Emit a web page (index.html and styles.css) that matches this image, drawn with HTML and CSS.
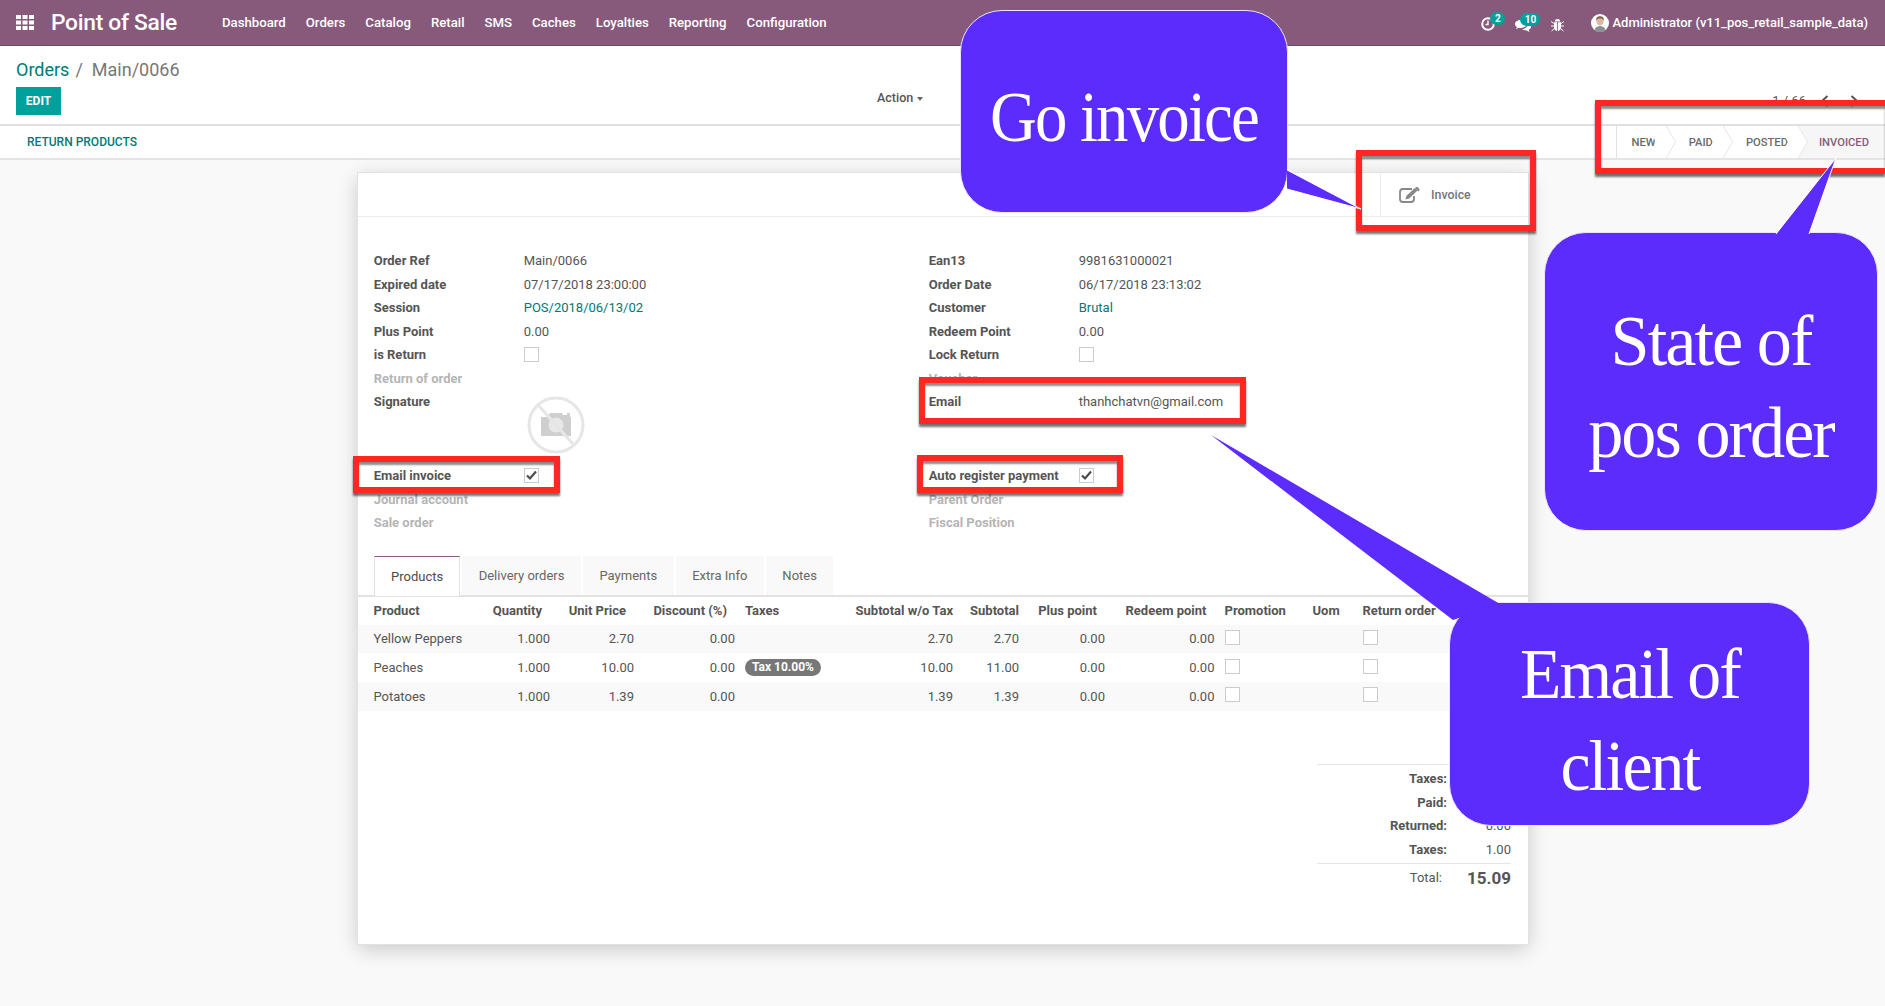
FILE: index.html
```html
<!DOCTYPE html>
<html lang="en">
<head>
    <meta charset="UTF-8">
    <title>Orders - Main/0066</title>
    <link rel="stylesheet" href="styles.css">
</head>
<body>
    <header class="navbar">
        <svg class="apps-icon" width="18" height="15" viewBox="0 0 18 15" fill="#fff">
            <rect x="0" y="0" width="5" height="4"/><rect x="6.5" y="0" width="5" height="4"/><rect x="13" y="0" width="5" height="4"/>
            <rect x="0" y="5.5" width="5" height="4"/><rect x="6.5" y="5.5" width="5" height="4"/><rect x="13" y="5.5" width="5" height="4"/>
            <rect x="0" y="11" width="5" height="4"/><rect x="6.5" y="11" width="5" height="4"/><rect x="13" y="11" width="5" height="4"/>
        </svg>
        <span class="app-title">Point of Sale</span>
        <nav class="menu">
            <a>Dashboard</a><a>Orders</a><a>Catalog</a><a>Retail</a><a>SMS</a><a>Caches</a><a>Loyalties</a><a>Reporting</a><a>Configuration</a>
        </nav>
        <div class="systray">
            <span class="tray-item tray-clock">
                <svg width="14" height="14" viewBox="0 0 14 14" fill="none" stroke="#fff" stroke-width="2"><circle cx="7" cy="7" r="5.8"/><path d="M7 3.5V7.5H4.5" stroke-width="1.4"/></svg>
                <b class="badge">2</b>
            </span>
            <span class="tray-item tray-chat">
                <svg width="16" height="12" viewBox="0 0 16 12" fill="#fff"><path d="M6 0C2.7 0 0 1.7 0 3.9c0 1.2.8 2.300 2 3L1 9l3-1.300c.6.1 1.300.2 2 .2 3.300 0 6-1.800 6-4S9.300 0 6 0z"/><path d="M13 4.300c0 2.500-2.800 4.500-6 4.700 1 .9 2.400 1.300 4 1.300l3.500 1.700-.8-2.400C15.200 9 16 8 16 6.900c0-1.100-1.200-2.100-3-2.600z"/></svg>
                <b class="badge">10</b>
            </span>
            <span class="tray-item tray-bug">
                <svg width="13" height="14" viewBox="0 0 13 14" fill="#fff"><path d="M3.700 3.500C4 1.800 5 1 6.500 1s2.500.8 2.800 2.500z"/><path d="M3 4.300h3.100V13C4 12.800 3 11 3 9zM6.900 4.300H10V9c0 2-1 3.800-3.100 4z"/><path d="M0 3.500l3 2M13 3.500l-3 2M0 8h3M10 8h3M.5 13l3-2.500M12.500 13l-3-2.500" stroke="#fff" stroke-width="1" fill="none"/></svg>
            </span>
            <svg class="avatar" width="18" height="18" viewBox="0 0 18 18">
                <circle cx="9" cy="9" r="9" fill="#fff"/>
                <ellipse cx="9" cy="7" rx="3.600" ry="4.400" fill="#d9b9a0"/>
                <path d="M5.200 7C4.800 3 7 2.300 9 2.300s4.200.7 3.800 4.700c-.5-2-2-2.500-3.800-2.500S5.700 5 5.200 7z" fill="#7b6650"/>
                <path d="M3.500 16c.8-3 3-4 5.500-4s4.700 1 5.500 4a9 9 0 0 1-11 0z" fill="#8d8f96"/>
            </svg>
            <span class="user-name">Administrator (v11_pos_retail_sample_data)</span>
        </div>
    </header>

    <section class="control-panel">
        <div class="breadcrumb"><a>Orders</a><span class="crumb-sep">/</span><span class="crumb-current">Main/0066</span></div>
        <div class="cp-row">
            <button class="btn-edit">EDIT</button>
            <span class="cp-action">Action <i class="caret"></i></span>
            <span class="pager"><span class="pager-count">1 / 66</span>
                <svg width="9" height="12" viewBox="0 0 9 12" fill="none" stroke="#555" stroke-width="2"><path d="M7.500 1L2 6l5.500 5"/></svg>
                <svg width="9" height="12" viewBox="0 0 9 12" fill="none" stroke="#555" stroke-width="2"><path d="M1.500 1L7 6l-5.500 5"/></svg>
            </span>
        </div>
    </section>

    <section class="statusbar-row">
        <a class="return-link">RETURN PRODUCTS</a>
        <div class="statusbar">
            <span class="step">NEW</span>
            <span class="step">PAID</span>
            <span class="step">POSTED</span>
            <span class="step step-active">INVOICED</span>
        </div>
    </section>

    <main class="sheet">
        <div class="button-box">
            <div class="stat-button">
                <svg width="22" height="16" viewBox="0 0 22 16" fill="none">
                    <path d="M13 2H4a3 3 0 0 0-3 3v7a3 3 0 0 0 3 3h8a3 3 0 0 0 3-3V9" stroke="#888" stroke-width="1.800"/>
                    <path d="M6.500 12.500l.8-3.500 8.400-8 2.800 2.600-8.400 8z" fill="#888"/>
                    <path d="M16.700 0l1.500-.2 2.300 2.200-.2 1.500-1 .9-3-2.800z" fill="#888"/>
                </svg>
                <span>Invoice</span>
            </div>
        </div>

        <div class="form-groups">
            <div class="form-col">
                <div class="field"><label>Order Ref</label><span>Main/0066</span></div>
                <div class="field"><label>Expired date</label><span>07/17/2018 23:00:00</span></div>
                <div class="field"><label>Session</label><a class="link">POS/2018/06/13/02</a></div>
                <div class="field"><label>Plus Point</label><span>0.00</span></div>
                <div class="field"><label>is Return</label><i class="check"></i></div>
                <div class="field muted"><label>Return of order</label></div>
                <div class="field field-tall">
                    <label>Signature</label>
                    <svg class="no-image" width="58" height="58" viewBox="0 0 58 58">
                        <circle cx="29" cy="29" r="27" fill="none" stroke="#e6e6e6" stroke-width="3"/>
                        <path d="M14 21h7l2-4h12l1 2h4v-2h3v4h1v19H14z" fill="#cfcfcf"/>
                        <circle cx="29" cy="29" r="7.500" fill="#e8e8e8"/>
                        <path d="M12 10l34 38" stroke="#e6e6e6" stroke-width="3"/>
                    </svg>
                </div>
                <div class="field"><label>Email invoice</label><i class="check"><svg width="13" height="11" viewBox="0 0 13 11" fill="none" stroke="#4c4c4c" stroke-width="2.200"><path d="M2 5.500l3 3 6-7"/></svg></i></div>
                <div class="field muted"><label>Journal account</label></div>
                <div class="field muted"><label>Sale order</label></div>
            </div>
            <div class="form-col">
                <div class="field"><label>Ean13</label><span>9981631000021</span></div>
                <div class="field"><label>Order Date</label><span>06/17/2018 23:13:02</span></div>
                <div class="field"><label>Customer</label><a class="link">Brutal</a></div>
                <div class="field"><label>Redeem Point</label><span>0.00</span></div>
                <div class="field"><label>Lock Return</label><i class="check"></i></div>
                <div class="field muted"><label>Voucher</label></div>
                <div class="field field-tall"><label>Email</label><span>thanhchatvn@gmail.com</span></div>
                <div class="field"><label>Auto register payment</label><i class="check"><svg width="13" height="11" viewBox="0 0 13 11" fill="none" stroke="#4c4c4c" stroke-width="2.200"><path d="M2 5.500l3 3 6-7"/></svg></i></div>
                <div class="field muted"><label>Parent Order</label></div>
                <div class="field muted"><label>Fiscal Position</label></div>
            </div>
        </div>

        <ul class="tabs">
            <li class="tab tab-active">Products</li>
            <li class="tab">Delivery orders</li>
            <li class="tab">Payments</li>
            <li class="tab">Extra Info</li>
            <li class="tab">Notes</li>
        </ul>

        <table class="lines">
            <thead>
                <tr>
                    <th class="left first">Product</th>
                    <th class="sort">Quantity</th>
                    <th class="sort">Unit Price</th>
                    <th class="sort">Discount (%)</th>
                    <th class="left">Taxes</th>
                    <th>Subtotal w/o Tax</th>
                    <th>Subtotal</th>
                    <th class="sort">Plus point</th>
                    <th class="sort">Redeem point</th>
                    <th class="left">Promotion</th>
                    <th class="left">Uom</th>
                    <th class="left">Return order</th>
                    <th></th>
                </tr>
            </thead>
            <tbody>
                <tr>
                    <td class="left first">Yellow Peppers</td><td>1.000</td><td>2.70</td><td>0.00</td><td class="left"></td><td>2.70</td><td>2.70</td><td>0.00</td><td>0.00</td>
                    <td class="left"><i class="check"></i></td><td></td><td class="left"><i class="check"></i></td><td></td>
                </tr>
                <tr>
                    <td class="left first">Peaches</td><td>1.000</td><td>10.00</td><td>0.00</td><td class="left"><span class="tax-tag">Tax 10.00%</span></td><td>10.00</td><td>11.00</td><td>0.00</td><td>0.00</td>
                    <td class="left"><i class="check"></i></td><td></td><td class="left"><i class="check"></i></td><td></td>
                </tr>
                <tr>
                    <td class="left first">Potatoes</td><td>1.000</td><td>1.39</td><td>0.00</td><td class="left"></td><td>1.39</td><td>1.39</td><td>0.00</td><td>0.00</td>
                    <td class="left"><i class="check"></i></td><td></td><td class="left"><i class="check"></i></td><td></td>
                </tr>
            </tbody>
        </table>

        <div class="totals">
            <div class="total-row"><label>Taxes:</label><span>14.09</span></div>
            <div class="total-row"><label>Paid:</label><span>15.09</span></div>
            <div class="total-row"><label>Returned:</label><span>0.00</span></div>
            <div class="total-row"><label>Taxes:</label><span>1.00</span></div>
            <div class="total-row total-grand"><label>Total:</label><span>15.09</span></div>
        </div>
    </main>

    <!-- Annotazioni sopra la pagina -->
    <div class="mark mark-state"></div>
    <div class="mark mark-invoice"></div>
    <div class="mark mark-email"></div>
    <div class="mark mark-email-invoice"></div>
    <div class="mark mark-auto"></div>

    <div class="bubble bubble-invoice"><span>Go invoice</span></div>
    <div class="bubble bubble-state"><span>State of<br>pos order</span></div>
    <div class="bubble bubble-email"><span>Email of<br>client</span></div>

    <svg class="tails" width="1885" height="1006" viewBox="0 0 1885 1006">
        <path d="M1287 170L1361 209L1287 189" fill="#5b2cfb" stroke="#fff" stroke-width="1"/>
        <path d="M1776 234L1836 158L1809 234" fill="#5b2cfb" stroke="#fff" stroke-width="1"/>
        <path d="M1453 620L1211 435L1500 604" fill="#5b2cfb"/>
    </svg>
</body>
</html>
```

FILE: styles.css
```css
html, body {
    margin: 0;
    height: 1006px;
    overflow: hidden;
}
body {
    position: relative;
    font-family: Roboto, "Noto Sans", sans-serif;
    font-size: 13px;
    color: #555;
    background-color: #f9f9f9;
}

/* Barra superiore */
.navbar {
    display: flex;
    align-items: center;
    height: 45px;
    border-bottom: 1px solid #6f4a66;
    background-color: #875a7b;
    color: white;
}
.apps-icon {
    margin-left: 16px;
}
.app-title {
    margin-left: 17px;
    font-size: 22.800px;
    font-weight: 500;
    letter-spacing: -0.3px;
}
.menu {
    display: flex;
    gap: 20px;
    margin-left: 45px;
    font-size: 13.200px;
    font-weight: 500;
}
.systray {
    display: flex;
    align-items: center;
    margin-left: auto;
    padding-right: 17px;
}
.tray-item {
    position: relative;
    display: flex;
}
.tray-clock {
    margin-top: 2px;
}
.tray-chat {
    margin-left: 20px;
    margin-top: 6px;
}
.tray-bug {
    margin-left: 20px;
    margin-top: 4px;
}
.badge {
    position: absolute;
    top: -5px;
    left: 9px;
    min-width: 13px;
    height: 13px;
    padding: 0 1px;
    border-radius: 7px;
    background-color: #00a09d;
    font-size: 10px;
    font-weight: 700;
    line-height: 13px;
    text-align: center;
}
.tray-chat .badge {
    top: -7px;
    left: 5px;
    min-width: 18px;
}
.avatar {
    margin-left: 27px;
}
.user-name {
    margin-left: 3px;
    font-weight: 500;
}

/* Pannello di controllo */
.control-panel {
    height: 78px;
    padding: 0 16px;
    border-bottom: 2px solid #e0e0e0;
    background-color: white;
}
.breadcrumb {
    padding-top: 12px;
    height: 29px;
    font-size: 18px;
    line-height: 24px;
}
.breadcrumb a {
    color: #007a77;
}
.crumb-sep {
    margin: 0 9px 0 6px;
    color: #777;
}
.crumb-current {
    color: #777;
}
.cp-row {
    display: flex;
    align-items: flex-start;
}
.btn-edit {
    width: 45px;
    height: 28px;
    border: none;
    padding: 0;
    background-color: #00a09d;
    color: white;
    font-family: inherit;
    font-size: 12px;
    font-weight: 700;
}
.cp-action {
    margin-left: 816px;
    font-size: 12.5px;
    font-weight: 500;
    line-height: 22px;
}
.caret {
    display: inline-block;
    margin-left: 1px;
    vertical-align: middle;
    border-top: 4px solid #666;
    border-left: 3px solid transparent;
    border-right: 3px solid transparent;
}
.pager {
    display: flex;
    align-items: center;
    gap: 21px;
    margin: 4px 0 0 auto;
    padding-right: 10px;
    line-height: 20px;
}
.pager-count {
    margin-right: -7px;
}

/* Riga con i pulsanti e gli stati */
.statusbar-row {
    display: flex;
    align-items: center;
    justify-content: space-between;
    height: 32px;
    border-bottom: 2px solid #e4e4e4;
    background-color: white;
}
.return-link {
    margin-left: 27px;
    color: #007a77;
    font-size: 12px;
    font-weight: 500;
}
.statusbar {
    display: flex;
    align-self: stretch;
    border-left: 1px solid #e2e2e2;
    font-size: 11.200px;
    font-weight: 500;
    color: #6a6a6a;
}
.step {
    position: relative;
    display: flex;
    align-items: center;
    padding: 0 20px 0 13px;
}
.step:first-child {
    padding-left: 15px;
}
.step::before,
.step::after {
    content: "";
    position: absolute;
    right: 0;
    width: 20px;
    height: 50%;
    z-index: 1;
    box-sizing: border-box;
    border-right: 1px solid #e6e6e6;
    background-color: white;
}
.step::before {
    top: 0;
    transform-origin: bottom right;
    transform: skewX(30deg);
}
.step::after {
    bottom: 0;
    transform-origin: top right;
    transform: skewX(-30deg);
}
.step-active {
    margin-left: -10px;
    padding: 0 16px 0 21px;
    background-color: #f6f6f6;
    color: #875a7b;
}
.step-active::before,
.step-active::after {
    display: none;
}

/* Foglio */
.sheet {
    width: 1170px;
    height: 771px;
    margin: 12px 0 0 357px;
    border: 1px solid #e2e2e2;
    background-color: white;
    box-shadow: 0 5px 20px -1px rgba(0, 0, 0, 0.2);
}
.button-box {
    display: flex;
    justify-content: flex-end;
    height: 43px;
    border-bottom: 1px solid #ececec;
}
.stat-button {
    display: flex;
    align-items: center;
    gap: 10px;
    width: 129px;
    padding-left: 18px;
    border-left: 1px solid #ececec;
    color: #777;
    font-size: 12.4px;
    font-weight: 500;
}
.form-groups {
    display: grid;
    grid-template-columns: 555px 1fr;
    padding: 32px 0 0 15.700px;
}
.field {
    display: flex;
    align-items: center;
    height: 23.500px;
}
.field label {
    width: 150px;
    flex: none;
    font-weight: 700;
}
.field-tall {
    position: relative;
    align-items: flex-start;
    height: 74px;
    line-height: 23.500px;
}
.muted label {
    color: #b5b5b5;
}
.link {
    color: #007a77;
}
.check {
    display: inline-flex;
    align-items: center;
    justify-content: center;
    width: 13px;
    height: 13px;
    border: 1px solid #ccc;
    background-color: white;
}
.no-image {
    margin: 6px 0 0 3px;
}

/* Schede */
.tabs {
    display: flex;
    gap: 2px;
    height: 39px;
    margin: 21px 0 0;
    padding: 0 0 0 16px;
    list-style: none;
    border-bottom: 2px solid #e2e2e2;
}
.tab {
    padding: 0 16.500px;
    height: 39px;
    background-color: #f9f9f9;
    color: #666;
    line-height: 40px;
}
.tab-active {
    height: 40px;
    padding: 0 16px;
    box-sizing: border-box;
    border-top: 1px solid #875a7b;
    border-left: 1px solid #e2e2e2;
    border-right: 1px solid #e2e2e2;
    background-color: white;
    color: #4c4c4c;
}

/* Righe ordine */
.lines {
    width: 100%;
    border-collapse: collapse;
    table-layout: fixed;
}
.lines th,
.lines td {
    box-sizing: border-box;
    padding: 0 5px;
    text-align: right;
    white-space: nowrap;
    overflow: hidden;
}
.lines th {
    height: 28px;
    font-weight: 700;
}
.lines td {
    height: 28.700px;
}
.lines thead {
    box-shadow: 0 2px 3px rgba(0, 0, 0, 0.05);
}
.lines tbody tr:nth-child(odd) {
    background-color: #f9f9f9;
}
.lines .left {
    text-align: left;
}
.lines .first {
    padding-left: 15.500px;
}
.lines .sort {
    padding-right: 13px;
}
.lines th:nth-child(1) { width: 129px; }
.lines th:nth-child(2) { width: 68px; }
.lines th:nth-child(3) { width: 84px; }
.lines th:nth-child(4) { width: 101px; }
.lines th:nth-child(5) { width: 105px; }
.lines th:nth-child(6) { width: 113px; }
.lines th:nth-child(7) { width: 66px; }
.lines th:nth-child(8) { width: 86px; }
.lines th:nth-child(9) { width: 109.500px; }
.lines th:nth-child(10) { width: 88px; }
.lines th:nth-child(11) { width: 50px; }
.lines th:nth-child(12) { width: 92.500px; }
.tax-tag {
    display: inline-block;
    padding: 0 7px;
    border-radius: 9px;
    background-color: #777;
    color: white;
    font-size: 12px;
    font-weight: 700;
    line-height: 17px;
}

/* Totali */
.totals {
    width: 194px;
    margin: 53px 17px 0 auto;
    border-top: 1px solid #e6e6e6;
    padding-top: 2px;
}
.total-row {
    display: flex;
    justify-content: space-between;
    align-items: center;
    height: 23.700px;
}
.total-row label {
    width: 130px;
    font-weight: 700;
    text-align: right;
}
.total-grand {
    height: 27px;
    margin-top: 2px;
    border-top: 1px solid #e6e6e6;
}
.total-grand label {
    width: 125px;
    font-weight: 400;
}
.total-grand span {
    font-size: 17px;
    font-weight: 700;
}

/* Riquadri rossi */
.mark {
    position: absolute;
    box-sizing: border-box;
    border: 6px solid #ff2626;
    box-shadow: 0 3px 2px rgba(0, 0, 0, 0.55), inset 0 3px 2px rgba(0, 0, 0, 0.45);
}
.mark-state {
    left: 1595px;
    top: 100px;
    width: 290px;
    height: 74px;
    border-right: none;
}
.mark-invoice {
    left: 1356px;
    top: 150px;
    width: 180px;
    height: 81px;
}
.mark-email {
    left: 919px;
    top: 377px;
    width: 327px;
    height: 47px;
}
.mark-email-invoice {
    left: 353px;
    top: 456px;
    width: 207px;
    height: 37px;
}
.mark-auto {
    left: 917px;
    top: 455px;
    width: 206px;
    height: 38px;
}

/* Fumetti */
.bubble {
    position: absolute;
    box-sizing: border-box;
    display: flex;
    align-items: center;
    justify-content: center;
    padding-top: 11px;
    border: 1.500px solid #e9e4ff;
    border-radius: 42px;
    background-color: #5b2cfb;
    color: white;
    font-family: "Liberation Serif", serif;
    font-size: 72px;
    letter-spacing: -2px;
    line-height: 92px;
    text-align: center;
}
.bubble span {
    display: inline-block;
    transform: scaleX(0.9);
}
.bubble-invoice {
    left: 960px;
    top: 10px;
    width: 328px;
    height: 203px;
}
.bubble-state {
    left: 1544px;
    top: 232px;
    width: 334px;
    height: 299px;
}
.bubble-state span {
    transform: scaleX(0.975);
}
.bubble-email {
    left: 1449px;
    top: 602px;
    width: 361px;
    height: 224px;
}
.bubble-email span {
    transform: scaleX(0.94);
}
.tails {
    position: absolute;
    left: 0;
    top: 0;
    pointer-events: none;
}
```
